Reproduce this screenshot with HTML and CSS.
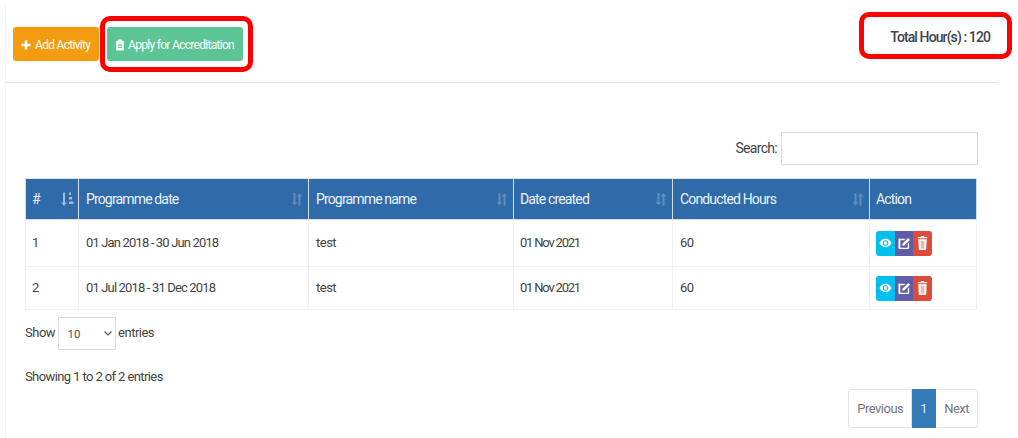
FILE: index.html
```html
<!DOCTYPE html>
<html lang="en">
<head>
    <meta charset="UTF-8">
    <meta name="viewport" content="width=device-width, initial-scale=1.0">
    <title>Activities</title>
    <link rel="stylesheet" href="styles.css">
</head>
<body>
    <div class="card">
        <div class="card-head">
            <div class="head-buttons">
                <a class="btn btn-orange" href="#">
                    <svg class="btn-icon" viewBox="0 0 12 12"><path d="M4.500 0.500h3v4h4v3h-4v4h-3v-4h-4v-3h4z" fill="#fff"/></svg>
                    Add Activity
                </a>
                <a class="btn btn-green" href="#">
                    <svg class="btn-icon" viewBox="0 0 10 14"><path d="M1.500 2h1.500v-1.500h4v1.500h1.500a1 1 0 0 1 1 1v9.500a1 1 0 0 1-1 1h-7a1 1 0 0 1-1-1v-9.500a1 1 0 0 1 1-1z" fill="#fff"/><path d="M2.500 6h5M2.500 8h5M2.500 10h5" stroke="#5bc595" stroke-width="1"/></svg>
                    Apply for Accreditation
                </a>
            </div>
            <div class="total">Total Hour(s) : 120</div>
        </div>

        <div class="card-body">
            <div class="search-row">
                <label for="search">Search:</label>
                <input type="text" id="search" class="field search-input">
            </div>

            <table>
                <colgroup>
                    <col class="col-no">
                    <col class="col-date">
                    <col class="col-name">
                    <col class="col-created">
                    <col class="col-hours">
                    <col>
                </colgroup>
                <thead>
                    <tr>
                        <th class="sort">#
                            <svg class="sort-icon sort-on" viewBox="0 0 14 14"><path d="M3 0.500h2v10h2l-3 3.500-3-3.500h2z" fill="#9fbbd9"/><path d="M9 0.500h2v2.500h-2zM9 5h3v2.500h-3zM9 9.500h4.500v2.500h-4.500z" fill="#9fbbd9"/></svg>
                        </th>
                        <th class="sort">Programme date
                            <svg class="sort-icon" viewBox="0 0 14 14"><path d="M3.500 1h2v9h2l-3 3.500-3-3.500h2zM8.500 13.500h2v-9h2l-3-3.500-3 3.500h2z" fill="#5c8cc0"/></svg>
                        </th>
                        <th class="sort">Programme name
                            <svg class="sort-icon" viewBox="0 0 14 14"><path d="M3.500 1h2v9h2l-3 3.500-3-3.500h2zM8.500 13.500h2v-9h2l-3-3.500-3 3.500h2z" fill="#5c8cc0"/></svg>
                        </th>
                        <th class="sort">Date created
                            <svg class="sort-icon" viewBox="0 0 14 14"><path d="M3.500 1h2v9h2l-3 3.500-3-3.500h2zM8.500 13.500h2v-9h2l-3-3.500-3 3.500h2z" fill="#5c8cc0"/></svg>
                        </th>
                        <th class="sort">Conducted Hours
                            <svg class="sort-icon" viewBox="0 0 14 14"><path d="M3.500 1h2v9h2l-3 3.500-3-3.500h2zM8.500 13.500h2v-9h2l-3-3.500-3 3.500h2z" fill="#5c8cc0"/></svg>
                        </th>
                        <th>Action</th>
                    </tr>
                </thead>
                <tbody>
                    <tr class="row-first">
                        <td>1</td>
                        <td class="cell-range">01 Jan 2018 - 30 Jun 2018</td>
                        <td>test</td>
                        <td class="cell-created">01 Nov 2021</td>
                        <td>60</td>
                        <td>
                            <div class="actions">
                                <a class="act act-view" href="#"><svg viewBox="0 0 14 14"><path d="M7 2.500c3 0 5.500 2.200 6.500 4.500-1 2.300-3.500 4.500-6.500 4.500s-5.500-2.200-6.500-4.500c1-2.300 3.500-4.500 6.500-4.500z" fill="#fff"/><circle cx="7" cy="7" r="3" fill="#00c0ef"/><circle cx="7" cy="7" r="1.800" fill="#fff"/></svg></a>
                                <a class="act act-edit" href="#"><svg viewBox="0 0 14 14"><path d="M1.500 2.500h6.500l-1.500 1.500h-4v8h8v-4l1.500-1.500v6a1 1 0 0 1-1 1h-9.500a1 1 0 0 1-1-1v-9.500a1 1 0 0 1 1-1z" fill="#fff"/><path d="M5 7.500l6-6 2 2-6 6-2.500.5z" fill="#fff"/></svg></a>
                                <a class="act act-del" href="#"><svg viewBox="0 0 10 15"><path d="M3.500 0h3l.5 1h3v1.500h-10v-1.500h3z" fill="#fff"/><path d="M0.500 3.500h9l-.5 10.500a1 1 0 0 1-1 1h-6a1 1 0 0 1-1-1z" fill="#fff"/><path d="M3 5h4l-.3 8.500h-3.400z" fill="#f3b3a8"/></svg></a>
                            </div>
                        </td>
                    </tr>
                    <tr class="row-second">
                        <td>2</td>
                        <td class="cell-range">01 Jul 2018 - 31 Dec 2018</td>
                        <td>test</td>
                        <td class="cell-created">01 Nov 2021</td>
                        <td>60</td>
                        <td>
                            <div class="actions">
                                <a class="act act-view" href="#"><svg viewBox="0 0 14 14"><path d="M7 2.500c3 0 5.500 2.200 6.500 4.500-1 2.300-3.500 4.500-6.500 4.500s-5.500-2.200-6.500-4.500c1-2.300 3.500-4.500 6.500-4.500z" fill="#fff"/><circle cx="7" cy="7" r="3" fill="#00c0ef"/><circle cx="7" cy="7" r="1.800" fill="#fff"/></svg></a>
                                <a class="act act-edit" href="#"><svg viewBox="0 0 14 14"><path d="M1.500 2.500h6.500l-1.500 1.500h-4v8h8v-4l1.500-1.500v6a1 1 0 0 1-1 1h-9.500a1 1 0 0 1-1-1v-9.500a1 1 0 0 1 1-1z" fill="#fff"/><path d="M5 7.500l6-6 2 2-6 6-2.500.5z" fill="#fff"/></svg></a>
                                <a class="act act-del" href="#"><svg viewBox="0 0 10 15"><path d="M3.500 0h3l.5 1h3v1.500h-10v-1.500h3z" fill="#fff"/><path d="M0.500 3.500h9l-.5 10.500a1 1 0 0 1-1 1h-6a1 1 0 0 1-1-1z" fill="#fff"/><path d="M3 5h4l-.3 8.500h-3.400z" fill="#f3b3a8"/></svg></a>
                            </div>
                        </td>
                    </tr>
                </tbody>
            </table>

            <div class="length-row">
                <span>Show</span>
                <div class="select-wrap">
                    <select class="field length-select"><option>10</option></select>
                    <svg class="chevron" viewBox="0 0 8 5"><path d="M0.500 0.500l3.500 3.500 3.500-3.500" fill="none" stroke="#555" stroke-width="1.200"/></svg>
                </div>
                <span>entries</span>
            </div>
            <div class="info">Showing 1 to 2 of 2 entries</div>
            <div class="pager">
                <a href="#">Previous</a>
                <a href="#" class="current">1</a>
                <a href="#">Next</a>
            </div>
        </div>
    </div>

    <div class="mark mark-apply"></div>
    <div class="mark mark-total"></div>
</body>
</html>
```

FILE: styles.css
```css
html, body {
    height: 100%;
}
body {
    margin: 0;
    overflow: hidden;
    background-color: #fff;
    color: #444;
    font-family: "Roboto", "Liberation Sans", sans-serif;
    font-size: 14px;
    letter-spacing: -0.5px;
}
a {
    text-decoration: none;
}
.card {
    width: 991px;
    margin-left: 5px;
    margin-top: 5px;
    border-left: 1px solid #f3f3f3;
}
.card-head {
    display: flex;
    justify-content: space-between;
    height: 78px;
    padding: 22px 7px 0 7px;
    box-sizing: border-box;
    border-bottom: 1px solid #e4e4e4;
}
.head-buttons {
    display: flex;
    gap: 8px;
    align-items: flex-start;
}
.btn {
    display: flex;
    align-items: center;
    gap: 4px;
    height: 34px;
    box-sizing: border-box;
    padding: 1px 8px 0;
    border-radius: 3px;
    color: #fff;
    font-size: 12px;
    letter-spacing: -0.7px;
    white-space: nowrap;
}
.btn-orange {
    width: 86px;
    background-color: #f39c12;
}
.btn-green {
    width: 136px;
    gap: 3px;
    background-color: #5bc595;
}
.btn-icon {
    flex: none;
    width: 10px;
    height: 12px;
}
.total {
    margin-top: 2px;
    font-size: 14px;
    font-weight: 500;
    letter-spacing: -0.9px;
    color: #3f4450;
}
.card-body {
    padding: 49px 19px 20px 19px;
}
.search-row {
    display: flex;
    justify-content: flex-end;
    align-items: center;
    gap: 4px;
    height: 33px;
    margin-bottom: 13px;
    letter-spacing: -0.7px;
}
.search-row label {
    margin-bottom: 2px;
}
.field {
    box-sizing: border-box;
    border: 1px solid #d9dbe6;
    background-color: #fff;
}
.search-input {
    width: 197px;
    height: 33px;
}
table {
    width: 952px;
    table-layout: fixed;
    border-collapse: collapse;
}
.col-no { width: 53px; }
.col-date { width: 230px; }
.col-name { width: 205px; }
.col-created { width: 159px; }
.col-hours { width: 197px; }
th, td {
    padding: 0 6px 1px 7px;
    text-align: left;
    border: 1px solid #f1f1f1;
    font-weight: 400;
}
th:first-child, td:first-child,
th:nth-child(4), td:nth-child(4),
th:last-child, td:last-child {
    padding-left: 6px;
}
th {
    position: relative;
    height: 41px;
    box-sizing: border-box;
    background-color: #306ba9;
    border-color: #d3dfec;
    border-top-color: #dbe3ee;
    color: #eaf1f8;
    letter-spacing: -0.85px;
}
td {
    font-size: 13px;
}
.row-first td { height: 45px; }
.row-second td { height: 41px; }
.cell-range {
    letter-spacing: -0.85px;
}
.cell-created {
    letter-spacing: -1.2px;
}
.sort-icon {
    position: absolute;
    right: 4px;
    top: 13px;
    width: 14px;
    height: 14px;
}
.actions {
    display: flex;
    width: 56px;
    height: 25px;
    margin-top: 1px;
}
.act {
    display: flex;
    flex: 1;
    align-items: center;
    justify-content: center;
}
.act svg {
    width: 13px;
    height: 14px;
}
.act-view {
    background-color: #00c0ef;
    border-radius: 3px 0 0 3px;
}
.act-edit {
    background-color: #605ca8;
}
.act-del {
    background-color: #dd4b39;
    border-radius: 0 3px 3px 0;
}
.length-row {
    display: flex;
    align-items: center;
    gap: 2.5px;
    margin-top: 7px;
    font-size: 13px;
}
.length-row span {
    margin-bottom: 2px;
}
.select-wrap {
    position: relative;
    display: flex;
}
.length-select {
    width: 58px;
    height: 33px;
    padding-left: 9px;
    appearance: none;
    border-radius: 0;
    color: #555;
    font-family: inherit;
    font-size: 11.5px;
}
.chevron {
    position: absolute;
    right: 4px;
    top: 14px;
    width: 8px;
    height: 5px;
}
.info {
    margin-top: 19px;
    font-size: 13px;
    letter-spacing: -0.6px;
}
.pager {
    display: flex;
    justify-content: flex-end;
    margin-top: 5px;
    font-size: 13px;
}
.pager a {
    display: flex;
    align-items: center;
    height: 39px;
    box-sizing: border-box;
    padding: 0 8px;
    color: #777;
    border: 1px solid #e4e4e4;
    border-left: none;
}
.pager a:first-child {
    border-left: 1px solid #e4e4e4;
    border-radius: 3px 0 0 3px;
}
.pager a:last-child {
    border-radius: 0 3px 3px 0;
}
.pager .current {
    background-color: #337ab7;
    border-color: #337ab7;
    color: #dfe9f3;
}

/* red highlight boxes drawn over the screenshot */
.mark {
    position: absolute;
    box-sizing: border-box;
    border: 5px solid #f00;
    border-radius: 10px;
}
.mark-apply {
    left: 100px;
    top: 16px;
    width: 153px;
    height: 56px;
}
.mark-total {
    left: 859px;
    top: 12px;
    width: 153px;
    height: 47px;
}
```
